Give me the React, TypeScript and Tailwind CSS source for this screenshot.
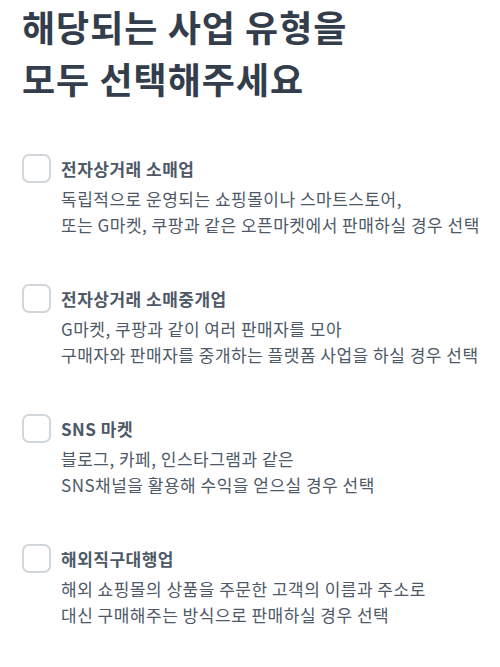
import React from "react";

const items = [
  {
    title: "전자상거래 소매업",
    lines: [
      "독립적으로 운영되는 쇼핑몰이나 스마트스토어,",
      "또는 G마켓, 쿠팡과 같은 오픈마켓에서 판매하실 경우 선택",
    ],
  },
  {
    title: "전자상거래 소매중개업",
    lines: [
      "G마켓, 쿠팡과 같이 여러 판매자를 모아",
      "구매자와 판매자를 중개하는 플랫폼 사업을 하실 경우 선택",
    ],
  },
  {
    title: "SNS 마켓",
    lines: ["블로그, 카페, 인스타그램과 같은", "SNS채널을 활용해 수익을 얻으실 경우 선택"],
  },
  {
    title: "해외직구대행업",
    lines: [
      "해외 쇼핑몰의 상품을 주문한 고객의 이름과 주소로",
      "대신 구매해주는 방식으로 판매하실 경우 선택",
    ],
  },
];

export default function App() {
  return (
    <div
      className="w-[500px] min-h-[667px] bg-white pl-[22px] overflow-hidden"
      style={{ fontFamily: '"Noto Sans CJK KR", "Noto Sans", sans-serif' }}
    >
      <h1 className="text-[36px] leading-[52px] font-bold text-[#333d4b] tracking-[1px]">
        해당되는 사업 유형을
        <br />
        모두 선택해주세요
      </h1>
      <div className="mt-[50px] flex flex-col gap-[46px]">
        {items.map((it) => (
          <div key={it.title} className="flex gap-[10px]">
            <div className="w-[29px] h-[29px] shrink-0 rounded-[7px] border-2 border-[#d1d6db] bg-white" />
            <div className="flex flex-col whitespace-nowrap">
              <div className="h-[29px] flex items-center text-[17px] font-bold text-[#4e5968] tracking-[0.5px]">
                {it.title}
              </div>
              <div className="mt-[3px] text-[17px] leading-[26px] text-[#4e5968] tracking-[0.5px]">
                {it.lines.map((l) => (
                  <div key={l}>{l}</div>
                ))}
              </div>
            </div>
          </div>
        ))}
      </div>
    </div>
  );
}
